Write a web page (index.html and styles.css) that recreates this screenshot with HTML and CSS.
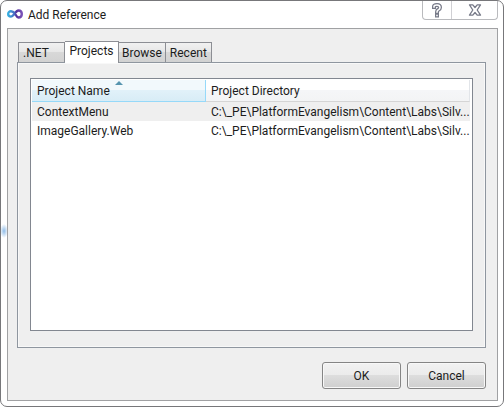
FILE: index.html
```html
<!DOCTYPE html>
<html lang="en">
<head>
<meta charset="utf-8">
<title>Add Reference</title>
<link rel="stylesheet" href="styles.css">
</head>
<body>
<main class="window">
  <header class="titlebar">
    <svg class="logo" viewBox="0 0 16 10" aria-hidden="true">
      <defs>
        <linearGradient id="loop" x1="0" x2="1" y1="0" y2="0">
          <stop offset="0" stop-color="#35aee0"/>
          <stop offset="0.45" stop-color="#4a6cc4"/>
          <stop offset="0.6" stop-color="#53309a"/>
          <stop offset="1" stop-color="#7a52b8"/>
        </linearGradient>
      </defs>
      <path d="M8 5C6.500 3 5.500 2.200 4 2.200C2.300 2.200 1.200 3.400 1.200 5C1.200 6.600 2.300 7.600 4 7.600C7 7.600 8.200 1.500 11.500 1.500C13.500 1.500 14.800 3 14.800 5C14.800 7 13.500 8.500 11.500 8.500C10 8.500 9 6.500 8 5" fill="none" stroke="url(#loop)" stroke-width="2.400"/>
    </svg>
    <h1 class="title">Add Reference</h1>
    <div class="caption">
      <button class="caption-button" type="button" aria-label="Help">
        <svg class="help-icon" viewBox="0 0 12 16" aria-hidden="true">
          <path class="glyph-edge" d="M3 5V4.500Q3 3 6 3Q9 3 9 5.500Q9 7 7.500 7.700Q6 8.300 6 10M6 13.500V13.600"/>
          <path class="glyph-core" d="M3 5V4.500Q3 3 6 3Q9 3 9 5.500Q9 7 7.500 7.700Q6 8.300 6 10M6 13.500V13.600"/>
        </svg>
      </button>
      <button class="caption-button close" type="button" aria-label="Close">
        <svg class="close-icon" viewBox="0 0 14 12" aria-hidden="true">
          <path d="M1.500 0.800H4.800L7 3.500L9.200 0.800H12.500L9.200 6L12.500 11.200H9.200L7 8.500L4.800 11.200H1.500L4.800 6Z" fill="#fff" stroke="#777a88" stroke-width="1.300" stroke-linejoin="round"/>
        </svg>
      </button>
    </div>
  </header>

  <section class="client">
    <div class="tabs" role="tablist">
      <button class="tab net" type="button" role="tab" aria-selected="false">.NET</button>
      <button class="tab selected" type="button" role="tab" aria-selected="true">Projects</button>
      <button class="tab" type="button" role="tab" aria-selected="false">Browse</button>
      <button class="tab" type="button" role="tab" aria-selected="false">Recent</button>
    </div>
    <div class="panel" role="tabpanel">
      <div class="list">
        <table class="projects">
          <colgroup><col class="name-column"><col></colgroup>
          <thead>
            <tr>
              <th class="sorted" scope="col" aria-sort="ascending">Project Name
                <svg class="sort-arrow" viewBox="0 0 8 4" aria-hidden="true"><path d="M0 4L4 0L8 4Z" fill="#5795af"/></svg>
              </th>
              <th scope="col">Project Directory</th>
            </tr>
          </thead>
          <tbody>
            <tr class="current"><td>ContextMenu</td><td>C:\_PE\PlatformEvangelism\Content\Labs\Silv...</td></tr>
            <tr><td>ImageGallery.Web</td><td>C:\_PE\PlatformEvangelism\Content\Labs\Silv...</td></tr>
          </tbody>
        </table>
      </div>
    </div>
    <footer class="actions">
      <button class="action" type="button">OK</button>
      <button class="action" type="button">Cancel</button>
    </footer>
  </section>
</main>
</body>
</html>
```
FILE: styles.css
```css
* { box-sizing: border-box; }

body {
  margin: 0;
  background: #fff;
  color: #1c1c1c;
  font: 12px/16px Roboto, "Open Sans", sans-serif;
}

button { font: inherit; color: inherit; }

.window {
  display: flex;
  flex-direction: column;
  min-height: 100vh;
  padding: 0 5px 5px 6px;
  border: 1px solid #77777a;
  border-radius: 7px;
  background: radial-gradient(ellipse 4px 7px at 3px 230px, #8fbce8, transparent) #fff;
}

.titlebar {
  display: flex;
  align-items: flex-start;
  height: 27px;
}

.logo {
  width: 16px;
  height: 10px;
  margin: 8px 5px 0 0;
}

.title {
  flex: 1;
  margin: 6px 0 0;
  font-size: 12px;
  font-weight: 400;
}

.caption {
  display: flex;
  height: 19px;
  border: 1px solid #b9babd;
  border-top: 0;
  border-radius: 0 0 4px 4px;
}

.caption-button {
  display: flex;
  align-items: center;
  justify-content: center;
  width: 28px;
  padding: 0;
  border: 0;
  background: none;
}

.close {
  width: 46px;
  border-left: 1px solid #d0d0d4;
}

.help-icon { width: 12px; height: 16px; }
.close-icon { width: 14px; height: 12px; }

.glyph-edge,
.glyph-core {
  fill: none;
  stroke: #777a88;
  stroke-width: 4;
  stroke-linecap: square;
  stroke-linejoin: round;
}

.glyph-core {
  stroke: #fff;
  stroke-width: 1.5;
}

.client {
  flex: 1;
  display: flex;
  flex-direction: column;
  padding: 12px 11px 11px 9px;
  border: 1px solid #a0a1a3;
  background: #efefef;
}

.tabs {
  display: flex;
  align-items: flex-end;
  padding-left: 1px;
}

.tab {
  min-width: 46px;
  height: 20px;
  padding: 0 3px;
  border: 1px solid #8c8e94;
  border-left: 0;
  border-bottom: 0;
  background: linear-gradient(#f1f1f1, #e6e6e6 50%, #d8d8d8 50%, #d2d2d2);
  white-space: nowrap;
}

.net {
  min-width: 47px;
  padding: 0 4px;
  border-left: 1px solid #8c8e94;
  text-align: left;
}

.selected {
  position: relative;
  min-width: 54px;
  height: 22px;
  margin-bottom: -1px;
  padding: 0 3px 3px;
  background: #fff;
}

.panel {
  flex: 1;
  display: flex;
  padding: 15px 12px 16px;
  border: 1px solid #8f969f;
  box-shadow: inset 0 0 0 1px #f8f8f8;
}

.list {
  flex: 1;
  padding: 1px 2px 1px 1px;
  border: 1px solid #828790;
  background: #fff;
}

.projects {
  width: 100%;
  border-collapse: separate;
  border-spacing: 0;
  table-layout: fixed;
}

.name-column { width: 174px; }

.projects th,
.projects td {
  height: 19px;
  padding: 0 0 0 5px;
  font-weight: 400;
  text-align: left;
  white-space: nowrap;
}

.projects th {
  position: relative;
  height: 22px;
  border-right: 1px solid #e2e5e9;
  border-bottom: 1px solid #d5d5d5;
  background: linear-gradient(#fff 50%, #f5f6f8 50%, #f3f4f5);
}

.projects .sorted {
  border-color: #96d9f9;
  background: linear-gradient(#f2f9fc 50%, #e1f1f9 50%, #d8ecf6);
}

.sort-arrow {
  position: absolute;
  top: 1px;
  left: 50%;
  width: 8px;
  height: 4px;
  margin-left: -4px;
}

.current td { background: #efefef; }

.actions {
  display: flex;
  justify-content: flex-end;
  gap: 6px;
  margin-top: 14px;
}

.action {
  width: 79px;
  height: 27px;
  padding: 0;
  border: 1px solid #858585;
  border-radius: 3px;
  background: linear-gradient(#f2f2f2, #ebebeb 50%, #dddddd 50%, #cfcfcf);
  box-shadow: inset 0 0 0 1px #f8f8f8;
}
```
